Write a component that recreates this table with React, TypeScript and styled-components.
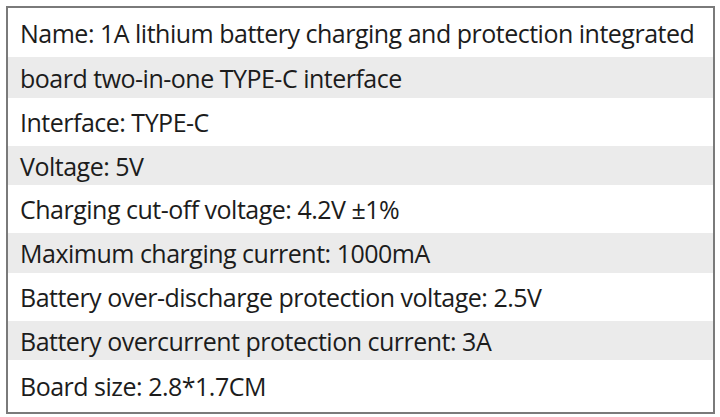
import styled, { createGlobalStyle } from 'styled-components';

const GlobalStyle = createGlobalStyle`
  html, body {
    margin: 0;
    padding: 0;
    background: #ffffff;
  }
  body {
    font-family: "Open Sans", "Noto Sans", "Liberation Sans", sans-serif;
  }
`;

const Page = styled.div`
  width: 720px;
  height: 417px;
  padding: 6px 5px 3px 6px;
  box-sizing: border-box;
  background: #ffffff;
`;

const Table = styled.div`
  display: flex;
  flex-direction: column;
  border: 2px solid #7a7a7a;
  box-sizing: border-box;
  width: 709px;
  height: 408px;
`;

const Row = styled.div<{ $shaded: boolean; $h: number }>`
  display: flex;
  align-items: center;
  height: ${({ $h }) => $h}px;
  padding-left: 12px;
  background: ${({ $shaded }) => ($shaded ? '#ebebeb' : '#ffffff')};
  color: #1c1c1c;
  font-size: 25px;
  letter-spacing: -0.5px;
  white-space: nowrap;
  flex-shrink: 0;
`;

const rows: { text: string; h: number }[] = [
  { text: 'Name: 1A lithium battery charging and protection integrated', h: 49 },
  { text: 'board two-in-one TYPE-C interface', h: 41 },
  { text: 'Interface: TYPE-C', h: 48 },
  { text: 'Voltage: 5V', h: 39 },
  { text: 'Charging cut-off voltage: 4.2V \u00b11%', h: 48 },
  { text: 'Maximum charging current: 1000mA', h: 40 },
  { text: 'Battery over-discharge protection voltage: 2.5V', h: 48 },
  { text: 'Battery overcurrent protection current: 3A', h: 39 },
  { text: 'Board size: 2.8*1.7CM', h: 52 },
];

export default function App() {
  return (
    <>
      <GlobalStyle />
      <Page>
        <Table>
          {rows.map((r, i) => (
            <Row key={r.text} $shaded={i % 2 === 1} $h={r.h}>
              {r.text}
            </Row>
          ))}
        </Table>
      </Page>
    </>
  );
}
